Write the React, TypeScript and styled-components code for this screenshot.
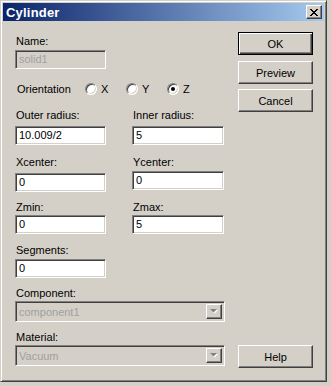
import React from "react";
import styled, { createGlobalStyle, css } from "styled-components";

const Global = createGlobalStyle`
  html, body { margin: 0; padding: 0; background: #d4d0c8; }
  body { font-family: "Liberation Sans", Arial, sans-serif; font-size: 11px; color: #000; }
  * { box-sizing: border-box; }
`;

const Window = styled.div`
  width: 327px;
  height: 382px;
  background: #d4d0c8;
  border: 1px solid;
  border-color: #d4d0c8 #404040 #404040 #d4d0c8;
  box-shadow: inset 1px 1px #fff, inset -1px -1px #808080;
  padding: 2px;
  display: flex;
  flex-direction: column;
`;

const TitleBar = styled.div`
  height: 18px;
  background: linear-gradient(to right, #0a246a, #a6caf0);
  display: flex;
  align-items: center;
  justify-content: space-between;
  padding: 0 2px 0 3px;
`;

const Title = styled.span`
  color: #fff;
  font-weight: bold;
  font-size: 13px;
  letter-spacing: 0.2px;
`;

const raised = css`
  background: #d4d0c8;
  border: 1px solid;
  border-color: #fff #404040 #404040 #fff;
  box-shadow: inset -1px -1px #808080, inset 1px 1px #d4d0c8;
`;

const sunken = css`
  border: 1px solid;
  border-color: #808080 #fff #fff #808080;
  box-shadow: inset 1px 1px #404040, inset -1px -1px #d4d0c8;
`;

const CloseButton = styled.div`
  ${raised};
  width: 16px;
  height: 14px;
  display: flex;
  align-items: center;
  justify-content: center;
`;

const Body = styled.div`
  flex: 1;
  display: flex;
`;

const LeftPane = styled.div`
  flex: 1;
  padding: 14px 0 0 12px;
  display: flex;
  flex-direction: column;
`;

const RightPane = styled.div`
  width: 75px;
  margin-right: 11px;
  padding: 11px 0 11px 0;
  display: flex;
  flex-direction: column;
`;

const Label = styled.div<{ $disabled?: boolean }>`
  height: 13px;
  line-height: 13px;
  padding-left: 1px;
  white-space: nowrap;
`;

const TextBox = styled.div<{ $disabled?: boolean; $width?: number }>`
  ${sunken};
  width: ${(p) => p.$width ?? 91}px;
  height: 19px;
  background: ${(p) => (p.$disabled ? "#d4d0c8" : "#fff")};
  color: ${(p) => (p.$disabled ? "#a0a0a0" : "#000")};
  padding-left: 3px;
  display: flex;
  align-items: center;
  line-height: 13px;
`;

const Row = styled.div<{ $mt: number }>`
  display: grid;
  grid-template-columns: 91px 92px;
  column-gap: 26px;
  margin-top: ${(p) => p.$mt}px;
`;

const Field = styled.div<{ $gap?: number; $shift?: number }>`
  display: flex;
  flex-direction: column;
  gap: ${(p) => p.$gap ?? 3}px;
  margin-top: ${(p) => p.$shift ?? 0}px;
`;

const RadioRow = styled.div`
  display: flex;
  align-items: center;
  height: 14px;
  margin-top: 13px;
  padding-left: 2px;
`;

const RadioGroupLabel = styled.span`
  width: 68px;
`;

const RadioOption = styled.div`
  width: 41px;
  display: flex;
  align-items: center;
  gap: 4px;
`;

const RadioCircle = styled.div<{ $checked?: boolean }>`
  width: 12px;
  height: 12px;
  border-radius: 50%;
  background: #fff;
  border: 1px solid;
  border-color: #808080 #fff #fff #808080;
  box-shadow: inset 1px 1px #404040, inset -1px -1px #d4d0c8;
  display: flex;
  align-items: center;
  justify-content: center;
  &::after {
    content: "";
    display: ${(p) => (p.$checked ? "block" : "none")};
    width: 4px;
    height: 4px;
    border-radius: 50%;
    background: #000;
  }
`;

const Combo = styled.div`
  ${sunken};
  width: 210px;
  height: 21px;
  background: #d4d0c8;
  display: flex;
  align-items: stretch;
  padding: 2px;
`;

const ComboText = styled.div`
  flex: 1;
  color: #a0a0a0;
  display: flex;
  align-items: center;
  padding-left: 1px;
`;

const ComboButton = styled.div`
  ${raised};
  width: 16px;
  display: flex;
  align-items: center;
  justify-content: center;
`;

const Button = styled.div<{ $default?: boolean; $mt?: number; $auto?: boolean }>`
  width: 75px;
  height: 23px;
  margin-top: ${(p) => (p.$auto ? "auto" : `${p.$mt ?? 0}px`)};
  display: flex;
  align-items: center;
  justify-content: center;
  background: #d4d0c8;
  ${(p) =>
    p.$default
      ? css`
          border: 1px solid #000;
          box-shadow: inset 1px 1px #fff, inset -1px -1px #404040, inset -2px -2px #808080;
        `
      : raised}
`;

const Arrow = () => (
  <svg width="8" height="5" viewBox="0 0 8 5">
    <path d="M1 1h7L4.5 4.5z" fill="#fff" />
    <path d="M0 0h7L3.5 3.5z" fill="#808080" />
  </svg>
);

const CloseX = () => (
  <svg width="8" height="7" viewBox="0 0 8 7">
    <path d="M0 0h2v1h1v1h2V1h1V0h2v1H7v1H6v1H5v1h1v1h1v1h1v1H6V6H5V5H3v1H2v1H0V6h1V5h1V4h1V3H2V2H1V1H0z" fill="#000" />
  </svg>
);

export default function App() {
  return (
    <>
      <Global />
      <Window>
        <TitleBar>
          <Title>Cylinder</Title>
          <CloseButton>
            <CloseX />
          </CloseButton>
        </TitleBar>
        <Body>
          <LeftPane>
            <Field $gap={2}>
              <Label>Name:</Label>
              <TextBox $disabled>solid1</TextBox>
            </Field>
            <RadioRow>
              <RadioGroupLabel>Orientation</RadioGroupLabel>
              <RadioOption>
                <RadioCircle />
                <span>X</span>
              </RadioOption>
              <RadioOption>
                <RadioCircle />
                <span>Y</span>
              </RadioOption>
              <RadioOption>
                <RadioCircle $checked />
                <span>Z</span>
              </RadioOption>
            </RadioRow>
            <Row $mt={13}>
              <Field $gap={4}>
                <Label>Outer radius:</Label>
                <TextBox>10.009/2</TextBox>
              </Field>
              <Field $gap={4}>
                <Label>Inner radius:</Label>
                <TextBox $width={92}>5</TextBox>
              </Field>
            </Row>
            <Row $mt={11}>
              <Field $gap={4}>
                <Label>Xcenter:</Label>
                <TextBox>0</TextBox>
              </Field>
              <Field $gap={2}>
                <Label>Ycenter:</Label>
                <TextBox $width={92}>0</TextBox>
              </Field>
            </Row>
            <Row $mt={9}>
              <Field $gap={1}>
                <Label>Zmin:</Label>
                <TextBox>0</TextBox>
              </Field>
              <Field $gap={1}>
                <Label>Zmax:</Label>
                <TextBox $width={92}>5</TextBox>
              </Field>
            </Row>
            <Row $mt={10}>
              <Field $gap={2}>
                <Label>Segments:</Label>
                <TextBox>0</TextBox>
              </Field>
            </Row>
            <Field $gap={1} $shift={9}>
              <Label>Component:</Label>
              <Combo>
                <ComboText>component1</ComboText>
                <ComboButton>
                  <Arrow />
                </ComboButton>
              </Combo>
            </Field>
            <Field $gap={1} $shift={9}>
              <Label>Material:</Label>
              <Combo>
                <ComboText>Vacuum</ComboText>
                <ComboButton>
                  <Arrow />
                </ComboButton>
              </Combo>
            </Field>
          </LeftPane>
          <RightPane>
            <Button $default>OK</Button>
            <Button $mt={6}>Preview</Button>
            <Button $mt={5}>Cancel</Button>
            <Button $auto>Help</Button>
          </RightPane>
        </Body>
      </Window>
    </>
  );
}
